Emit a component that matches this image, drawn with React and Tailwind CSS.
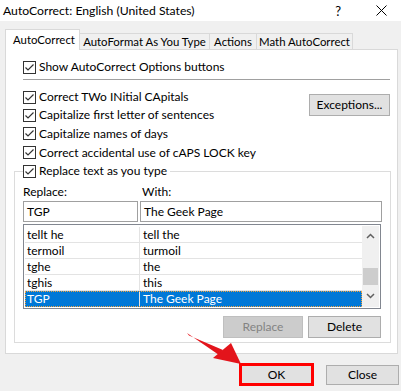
import React from "react";

function Check() {
  return (
    <span className="w-[13px] h-[13px] border border-[#333333] bg-white flex items-center justify-center shrink-0">
      <svg width="11" height="11" viewBox="0 0 11 11">
        <polyline points="1.5,5.5 4,8 9.5,2.5" fill="none" stroke="#333333" strokeWidth="1.2" />
      </svg>
    </span>
  );
}

function CheckRow({ label, className = "" }) {
  return (
    <div className={"flex items-center gap-[3px] h-[18px] whitespace-nowrap " + className}>
      <Check />
      <span>{label}</span>
    </div>
  );
}

const rows = [
  ["tellt he", "tell the"],
  ["termoil", "turmoil"],
  ["tghe", "the"],
  ["tghis", "this"],
];

export default function App() {
  return (
    <div
      className="relative w-[401px] h-[391px] bg-[#f0f0f0] text-[12px] leading-[16px] text-black overflow-hidden"
      style={{ fontFamily: "Lato, 'Noto Sans', sans-serif" }}
    >
      {/* title bar */}
      <div className="h-[21px] bg-white flex items-center pl-[3px]">
        <span className="text-[12.2px] whitespace-nowrap">AutoCorrect: English (United States)</span>
        <span className="ml-auto mr-[35px] text-[13px]">?</span>
        <svg width="11" height="11" viewBox="0 0 11 11" className="mr-[14px]">
          <path d="M0.5 0.5 L10.5 10.5 M10.5 0.5 L0.5 10.5" stroke="#000" strokeWidth="1" />
        </svg>
      </div>

      {/* tabs */}
      <div className="flex items-end pl-[5px] mt-[8px] h-[21px] relative z-10 whitespace-nowrap text-[11.4px]">
        <div className="h-[21px] w-[75px] bg-white border border-b-0 border-[#d9d9d9] flex items-start pt-[2px] pl-[7px]">
          AutoCorrect
        </div>
        <div className="h-[17px] bg-[#f0f0f0] border border-l-0 border-[#d9d9d9] flex items-center w-[130px] justify-center">
          AutoFormat As You Type
        </div>
        <div className="h-[17px] bg-[#f0f0f0] border border-l-0 border-[#d9d9d9] flex items-center w-[47px] justify-center">
          Actions
        </div>
        <div className="h-[17px] bg-[#f0f0f0] border border-l-0 border-[#d9d9d9] flex items-center w-[96px] justify-center">
          Math AutoCorrect
        </div>
      </div>

      {/* panel */}
      <div className="ml-[5px] -mt-[1px] w-[393px] h-[305px] bg-white border border-[#d9d9d9] pt-[8px]">
        <div className="pl-[17px] pr-[7px]">
          <CheckRow label="Show AutoCorrect Options buttons" />
          <div className="h-px bg-[#a0a0a0] mt-[3px]" />
          <div className="flex mt-[8px]">
            <div className="flex flex-col">
              <CheckRow label="Correct TWo INitial CApitals" />
              <CheckRow label="Capitalize first letter of sentences" />
              <CheckRow label="Capitalize names of days" className="h-[19px]" />
              <CheckRow label="Correct accidental use of cAPS LOCK key" className="h-[19px]" />
            </div>
            <button className="ml-auto mt-[6px] w-[81px] h-[22px] bg-[#e1e1e1] border border-[#adadad] flex items-center justify-center">
              Exceptions...
            </button>
          </div>
        </div>

        <fieldset className="mx-[8px] h-[181px] border border-[#dcdcdc] px-[8px]">
          <legend className="flex items-center gap-[3px] pr-[3px] h-[18px]">
            <Check />
            <span className="whitespace-nowrap">Replace text as you type</span>
          </legend>
          <div className="flex mt-[4px] h-[16px] items-center">
            <span className="w-[119px]">Replace:</span>
            <span>With:</span>
          </div>
          <div className="flex gap-[2px] mt-[1px]">
            <div className="w-[115px] h-[21px] border border-[#a0a0a0] flex items-center pl-[3px]">TGP</div>
            <div className="w-[242px] h-[21px] border border-[#a0a0a0] flex items-center pl-[3px]">The Geek Page</div>
          </div>
          <div className="mt-[2px] w-[358px] h-[85px] border border-[#828790] flex p-px">
            <div className="flex-1 flex flex-col pt-px">
              {rows.map(([a, b]) => (
                <div key={a} className="flex h-[16px] border-b border-[#e3e3e3]">
                  <div className="w-[115px] border-r border-[#e3e3e3] pl-[2px] leading-[15px]">{a}</div>
                  <div className="flex-1 pl-[3px] leading-[15px]">{b}</div>
                </div>
              ))}
              <div className="flex h-[16px] bg-[#0078d7] text-white border border-dotted border-[#f2a23c]">
                <div className="w-[114px] border-r border-[#e3e3e3] pl-[1px] leading-[14px]">TGP</div>
                <div className="flex-1 pl-[3px] leading-[14px]">The Geek Page</div>
              </div>
            </div>
            <div className="w-[17px] bg-[#f0f0f0] flex flex-col items-center">
              <svg width="9" height="6" viewBox="0 0 9 6" className="mt-[7px]">
                <polyline points="1,5 4.5,1.5 8,5" fill="none" stroke="#606060" strokeWidth="1.5" />
              </svg>
              <div className="mt-[29px] w-[15px] h-[17px] bg-[#cdcdcd]" />
              <svg width="9" height="6" viewBox="0 0 9 6" className="mt-[8px]">
                <polyline points="1,1 4.5,4.5 8,1" fill="none" stroke="#606060" strokeWidth="1.5" />
              </svg>
            </div>
          </div>
          <div className="flex justify-end gap-[5px] mt-[7px] pr-[1px]">
            <button className="w-[80px] h-[22px] bg-[#cccccc] border border-[#bfbfbf] text-[#838383] flex items-center justify-center">
              Replace
            </button>
            <button className="w-[73px] h-[22px] bg-[#e1e1e1] border border-[#adadad] flex items-center justify-center">
              Delete
            </button>
          </div>
        </fieldset>
      </div>

      {/* bottom buttons */}
      <div className="flex justify-end gap-[12px] mt-[9px] pr-[2px] items-center">
        <button className="w-[75px] h-[23px] bg-[#e1e1e1] border-[3px] border-[#ff0000] flex items-center justify-center">
          OK
        </button>
        <button className="w-[73px] h-[20px] bg-[#e1e1e1] border border-[#adadad] flex items-center justify-center">
          Close
        </button>
      </div>

      {/* annotation arrow */}
      <svg className="absolute left-0 top-0" width="401" height="391" viewBox="0 0 401 391">
        <polygon points="187,333 189,335.5 223,350 219,355" fill="#e3141b" />
        <polygon points="213,358 241,364 231,343" fill="#e3141b" />
      </svg>
    </div>
  );
}
